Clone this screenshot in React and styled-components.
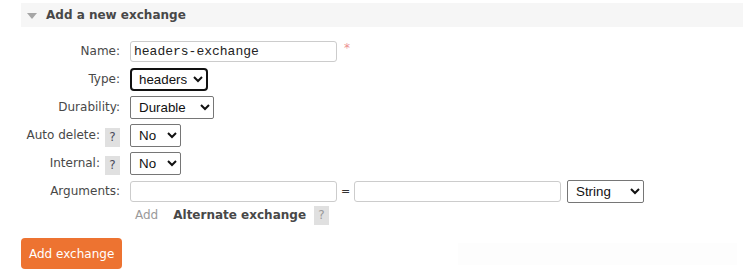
import React from "react";
import styled, { createGlobalStyle } from "styled-components";

const Global = createGlobalStyle`
  html, body { margin: 0; padding: 0; background: #fff; }
  body { font-family: "DejaVu Sans", Verdana, sans-serif; font-size: 12px; color: #484848; }
`;

const Page = styled.div`
  padding: 3px 0 0 21px;
`;

const SectionHeader = styled.div`
  height: 24px;
  background: #f6f6f6;
  display: flex;
  align-items: center;
  padding-left: 6px;
  gap: 9px;
`;

const Triangle = styled.span`
  width: 0;
  height: 0;
  border-left: 5px solid transparent;
  border-right: 5px solid transparent;
  border-top: 6px solid #a6a6a6;
  margin-top: 1px;
`;

const HeaderTitle = styled.h2`
  margin: 0;
  font-size: 12px;
  font-weight: bold;
  color: #484848;
`;

const Form = styled.form`
  margin-top: 10px;
  display: flex;
  flex-direction: column;
`;

const Row = styled.div`
  display: grid;
  grid-template-columns: 99px auto;
  column-gap: 10px;
  align-items: center;
  height: ${(p) => p.$h || 28}px;
`;

const Label = styled.label`
  display: flex;
  justify-content: flex-end;
  align-items: center;
  gap: 5px;
  color: #484848;
  white-space: nowrap;
`;

const Help = styled.span`
  display: inline-flex;
  align-items: center;
  justify-content: center;
  width: 15px;
  height: 19px;
  background: #e0e0e0;
  color: ${(p) => (p.$muted ? "#9a9a9a" : "#4a4a5a")};
  font-size: 12px;
  margin-top: ${(p) => p.$offset || 0}px;
`;

const Controls = styled.div`
  display: flex;
  align-items: center;
`;

const TextInput = styled.input`
  box-sizing: border-box;
  width: 207px;
  height: 21px;
  border: 1px solid #cccccc;
  border-radius: 3px;
  padding: 0 3px;
  font-family: "Liberation Mono", "Courier New", monospace;
  font-size: 13px;
  color: #222;
  background: #fff;
  outline: none;
`;

const Required = styled.span`
  color: #ec9090;
  font-size: 12px;
  margin-left: 7px;
  margin-top: -6px;
`;

const Select = styled.select`
  box-sizing: border-box;
  width: ${(p) => p.$w}px;
  height: 23px;
  margin-left: ${(p) => p.$ml || 0}px;
  font-family: "Liberation Sans", Arial, sans-serif;
  font-size: 13.33px;
  color: #111;
  background: #fff;
  border: ${(p) => (p.$focused ? "2px solid #111" : "1px solid #767676")};
  border-radius: ${(p) => (p.$focused ? 4 : 2)}px;
  padding: 0 ${(p) => (p.$focused ? 3 : 4)}px;
  outline: none;
`;

const Equals = styled.span`
  width: 17px;
  text-align: center;
  color: #333;
  font-size: 11px;
`;

const AddLink = styled.span`
  color: #9a9a9a;
  padding-left: 5px;
  margin-right: 15px;
`;

const SubHeading = styled.span`
  font-weight: bold;
  color: #484848;
  margin-right: 8px;
`;

const ButtonRow = styled.div`
  margin-top: 13px;
  display: flex;
  align-items: center;
`;

const PrimaryButton = styled.button`
  height: 31px;
  padding: 0 8px;
  background: #ed7331;
  color: #fff;
  border: none;
  border-radius: 4px;
  font-family: "DejaVu Sans", Verdana, sans-serif;
  font-size: 12px;
  cursor: pointer;
`;

const FaintStrip = styled.div`
  margin-left: auto;
  margin-right: 6px;
  width: 279px;
  height: 22px;
  background: #fdfdfd;
`;

export default function App() {
  return (
    <>
      <Global />
      <Page>
        <SectionHeader>
          <Triangle />
          <HeaderTitle>Add a new exchange</HeaderTitle>
        </SectionHeader>
        <Form onSubmit={(e) => e.preventDefault()}>
          <Row>
            <Label>Name:</Label>
            <Controls>
              <TextInput defaultValue="headers-exchange" />
              <Required>*</Required>
            </Controls>
          </Row>
          <Row>
            <Label>Type:</Label>
            <Controls>
              <Select $w={78} $focused defaultValue="headers">
                <option value="direct">direct</option>
                <option value="fanout">fanout</option>
                <option value="headers">headers</option>
                <option value="topic">topic</option>
              </Select>
            </Controls>
          </Row>
          <Row>
            <Label>Durability:</Label>
            <Controls>
              <Select $w={84} defaultValue="Durable">
                <option>Durable</option>
                <option>Transient</option>
              </Select>
            </Controls>
          </Row>
          <Row>
            <Label>
              Auto delete: <Help $offset={4}>?</Help>
            </Label>
            <Controls>
              <Select $w={51} defaultValue="No">
                <option>No</option>
                <option>Yes</option>
              </Select>
            </Controls>
          </Row>
          <Row>
            <Label>
              Internal: <Help $offset={4}>?</Help>
            </Label>
            <Controls>
              <Select $w={51} defaultValue="No">
                <option>No</option>
                <option>Yes</option>
              </Select>
            </Controls>
          </Row>
          <Row>
            <Label>Arguments:</Label>
            <Controls>
              <TextInput />
              <Equals>=</Equals>
              <TextInput />
              <Select $w={77} $ml={6} defaultValue="String">
                <option>String</option>
                <option>Number</option>
                <option>Boolean</option>
                <option>List</option>
              </Select>
            </Controls>
          </Row>
          <Row $h={20}>
            <span />
            <Controls>
              <AddLink>Add</AddLink>
              <SubHeading>Alternate exchange</SubHeading>
              <Help $muted>?</Help>
            </Controls>
          </Row>
          <ButtonRow>
            <PrimaryButton type="submit">Add exchange</PrimaryButton>
            <FaintStrip />
          </ButtonRow>
        </Form>
      </Page>
    </>
  );
}
